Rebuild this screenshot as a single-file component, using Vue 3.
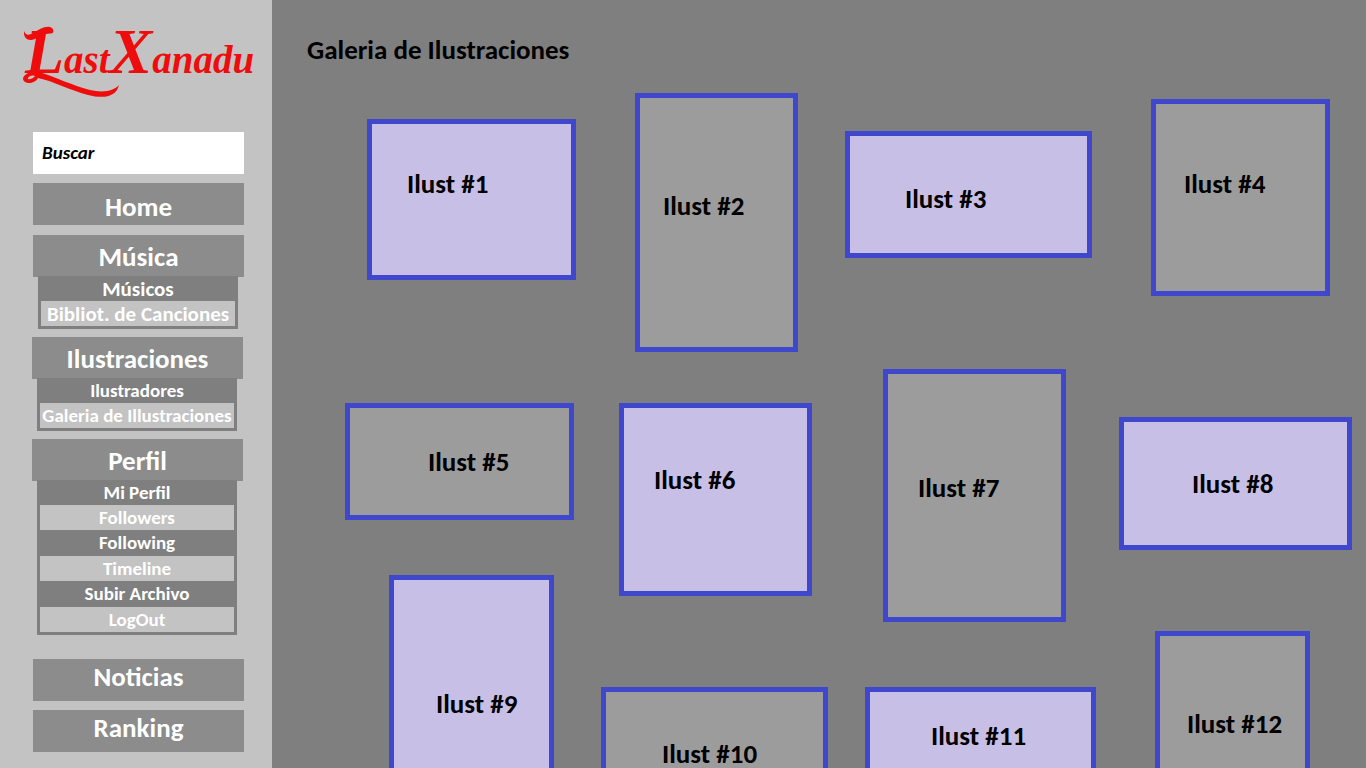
<script setup>
import { ref } from 'vue'

const search = ref('')

const menu = [
  { label: 'Home' },
  { label: 'Música', size: 'large', items: ['Músicos', 'Bibliot. de Canciones'] },
  { label: 'Ilustraciones', shifted: true, items: ['Ilustradores', 'Galeria de Illustraciones'] },
  {
    label: 'Perfil',
    shifted: true,
    items: ['Mi Perfil', 'Followers', 'Following', 'Timeline', 'Subir Archivo', 'LogOut'],
  },
]

const footerMenu = ['Noticias', 'Ranking']

// Each column lists its frames: outer size, spacing before it, and the caption's inset.
const columns = [
  [
    { n: 1, w: 209, h: 161, top: 26, left: 22, cx: 35, cy: 45, lilac: true },
    { n: 5, w: 229, h: 117, top: 123, left: 0, cx: 78, cy: 39 },
    { n: 9, w: 165, h: 240, top: 55, left: 44, cx: 42, cy: 109, lilac: true },
  ],
  [
    { n: 2, w: 163, h: 259, top: 0, left: 34, cx: 23, cy: 93 },
    { n: 6, w: 193, h: 193, top: 51, left: 18, cx: 30, cy: 57, lilac: true },
    { n: 10, w: 227, h: 130, top: 91, left: 0, cx: 56, cy: 47 },
  ],
  [
    { n: 3, w: 247, h: 127, top: 38, left: 0, cx: 55, cy: 48, lilac: true },
    { n: 7, w: 183, h: 253, top: 111, left: 38, cx: 30, cy: 99 },
    { n: 11, w: 231, h: 130, top: 65, left: 20, cx: 61, cy: 29, lilac: true },
  ],
  [
    { n: 4, w: 179, h: 197, top: 6, left: 32, cx: 28, cy: 65 },
    { n: 8, w: 233, h: 133, top: 121, left: 0, cx: 68, cy: 47, lilac: true },
    { n: 12, w: 155, h: 200, top: 81, left: 36, cx: 27, cy: 73 },
  ],
]

function frameStyle(f) {
  return {
    width: `${f.w}px`,
    height: `${f.h}px`,
    marginTop: `${f.top}px`,
    marginLeft: `${f.left}px`,
    padding: `${f.cy}px 0 0 ${f.cx}px`,
  }
}
</script>

<template>
  <div class="page">
    <aside class="sidebar">
      <a class="logo" href="#" aria-label="LastXanadu">
        <svg viewBox="0 0 240 84" width="240" height="84">
          <text x="8" y="55" class="logo-text">
            <tspan class="cap">L</tspan><tspan>ast</tspan><tspan class="cap">X</tspan><tspan>anadu</tspan>
          </text>
          <path class="flourish" d="M7 13 C9 18 12 17 16 15 C22 12 27 8 33 9 C36 10 37 12 36 15 C30 13 26 15 21 19 C15 24 6 23 7 13 Z" />
          <path
            class="flourish"
            d="M22 53 C14 52 6 57 6 61 C7 67 18 66 21 60 C36 63 55 73 71 77 C87 81 99 79 102 67 C97 73 86 75 73 72 C57 68 38 59 22 54 Z M18 58 C15 62 10 62 11 60 C12 58 15 57 18 58 Z"
            fill-rule="evenodd"
          />
        </svg>
      </a>

      <label class="search">
        <input v-model="search" type="search" placeholder="Buscar" aria-label="Buscar" />
      </label>

      <nav class="menu">
        <section
          v-for="group in menu"
          :key="group.label"
          class="group"
          :class="{ shifted: group.shifted, expanded: group.items }"
        >
          <a class="entry" href="#">{{ group.label }}</a>
          <ul v-if="group.items" class="submenu" :class="group.size">
            <li v-for="item in group.items" :key="item">
              <a href="#">{{ item }}</a>
            </li>
          </ul>
        </section>
      </nav>

      <nav class="menu menu-footer">
        <a v-for="label in footerMenu" :key="label" class="entry" href="#">{{ label }}</a>
      </nav>
    </aside>

    <main class="content">
      <h1>Galeria de Ilustraciones</h1>
      <div class="gallery">
        <div v-for="(column, i) in columns" :key="i" class="column">
          <figure
            v-for="frame in column"
            :key="frame.n"
            class="frame"
            :class="{ lilac: frame.lilac }"
            :style="frameStyle(frame)"
          >
            <figcaption>Ilust #{{ frame.n }}</figcaption>
          </figure>
        </div>
      </div>
    </main>
  </div>
</template>

<style>
body {
  margin: 0;
  background: #7f7f7f;
}
</style>

<style scoped>
.page {
  display: flex;
  height: 100vh;
  overflow: hidden;
  font-family: Calibri, Carlito, Lato, sans-serif;
  font-weight: 700;
  color: #000;
  background: #7f7f7f;
}

.page * {
  box-sizing: border-box;
}

a {
  color: inherit;
  text-decoration: none;
}

.sidebar {
  flex: 0 0 272px;
  padding: 18px 28px 0 33px;
  background: #c3c3c3;
}

.logo {
  display: block;
  height: 84px;
  margin: 0 -16px 30px;
}

.logo svg {
  display: block;
  overflow: visible;
}

.logo-text {
  font-family: 'Liberation Serif', serif;
  font-size: 39px;
  font-style: italic;
  font-weight: 700;
  fill: #ee0c0c;
}

.cap {
  font-size: 64px;
}

.flourish {
  fill: #ee0c0c;
}

.search input {
  display: block;
  width: 211px;
  height: 42px;
  margin: 0 0 9px;
  padding: 0 9px 2px;
  border: 0;
  border-radius: 0;
  outline: 0;
  appearance: none;
  background: #fff;
  font: italic 700 19px Calibri, Carlito, Lato, sans-serif;
  color: #000;
}

.search input::placeholder {
  color: #000;
  opacity: 1;
}

.menu {
  display: flex;
  flex-direction: column;
  color: #fff;
  text-align: center;
}

.group {
  width: 211px;
  margin-bottom: 10px;
}

.expanded {
  margin-bottom: 8px;
}

.shifted {
  margin-left: -1px;
}

.entry {
  display: block;
  width: 211px;
  height: 42px;
  padding-top: 5px;
  background: #8c8c8c;
  font-size: 27px;
  line-height: 38px;
}

.expanded .entry {
  padding-top: 3px;
}

.submenu {
  position: relative;
  margin: -1px 6px 0 5px;
  padding: 0 3px 3px;
  list-style: none;
  background: #7f7f7f;
  font-size: 19px;
  line-height: 26px;
}

.large {
  font-size: 21px;
}

.submenu li {
  height: 25px;
  white-space: nowrap;
}

.submenu li:nth-child(odd):not(:first-child) {
  height: 26px;
}

.submenu li:nth-child(even) {
  background: #c3c3c3;
}

.submenu a {
  display: block;
}

.menu-footer {
  gap: 9px;
  margin-top: 16px;
}

.menu-footer .entry {
  padding-top: 0;
  line-height: 36px;
}

.content {
  flex: 1;
  min-width: 0;
  padding: 35px 14px 0 73px;
}

h1 {
  margin: 0 0 28px -38px;
  font-size: 27px;
  line-height: 30px;
}

.gallery {
  display: grid;
  grid-template-columns: 256fr 244fr 274fr 233fr;
}

.column {
  min-width: 0;
}

.frame {
  margin: 0;
  border: 5px solid #3f48cc;
  background: #9c9c9c;
  font-size: 27px;
  line-height: 30px;
  white-space: nowrap;
}

.lilac {
  background: #c8bfe7;
}
</style>
